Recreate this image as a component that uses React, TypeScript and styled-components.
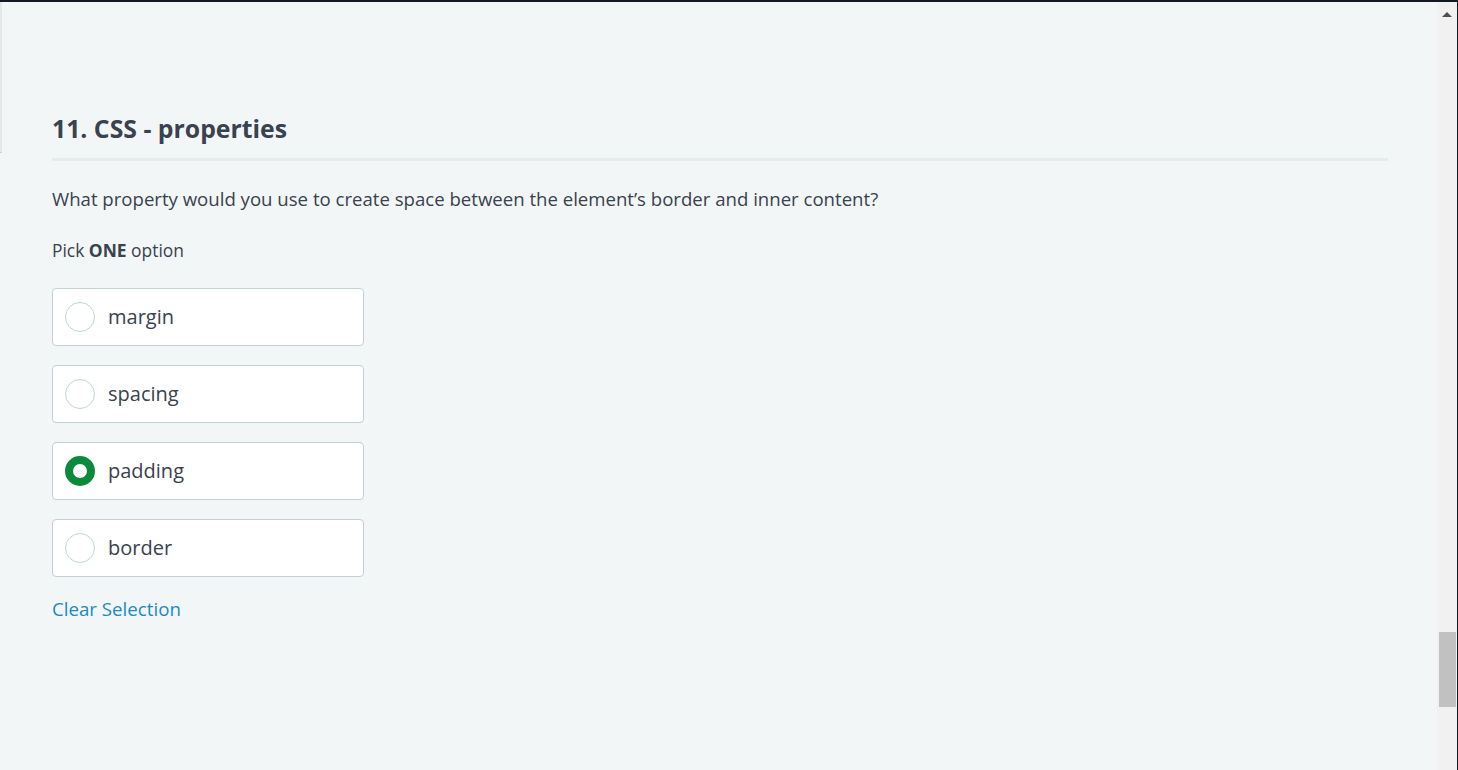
import styled, { createGlobalStyle } from "styled-components"

const GlobalStyle = createGlobalStyle`
  html, body {
    margin: 0;
    padding: 0;
    height: 100%;
    overflow: hidden;
  }
  body {
    font-family: "Open Sans", "Noto Sans", sans-serif;
    background: #f3f6f7;
  }
`

const options = ["margin", "spacing", "padding", "border"]
const selected = "padding"

type RadioProps = {
  $checked?: boolean
}

const Option = ({ label }: { label: string }) => {
  const checked = label === selected
  return (
    <OptionBox>
      <Radio $checked={checked} />
      <Label>{label}</Label>
    </OptionBox>
  )
}

export default function App() {
  return (
    <Frame>
      <GlobalStyle />
      <Main>
        <EdgeStrip />
        <Content>
          <Title>11. CSS - properties</Title>
          <Divider />
          <Question>
            What property would you use to create space between the element’s
            border and inner content?
          </Question>
          <Hint>
            Pick <strong>ONE</strong> option
          </Hint>
          <OptionList>
            {options.map((o) => (
              <Option key={o} label={o} />
            ))}
          </OptionList>
          <ClearLink>Clear Selection</ClearLink>
        </Content>
      </Main>
      <Scrollbar>
        <ArrowUp />
        <Track>
          <Thumb />
        </Track>
      </Scrollbar>
    </Frame>
  )
}

const Frame = styled.div`
  display: flex;
  height: 100vh;
  box-sizing: border-box;
  border-top: 2px solid #111a24;
  border-right: 1px solid #111a24;
`

const Main = styled.div`
  flex: 1;
  display: flex;
  min-width: 0;
`

const EdgeStrip = styled.div`
  width: 2px;
  height: 150px;
  background: #e3e9ea;
  border-bottom: 1px solid #c9d0d2;
`

const Content = styled.div`
  flex: 1;
  padding: 110px 49px 0 50px;
  color: #39424e;
`

const Title = styled.h2`
  margin: 0;
  font-size: 24.8px;
  line-height: 32px;
  font-weight: 700;
  color: #39424e;
`

const Divider = styled.div`
  height: 3px;
  background: #e6eced;
  margin-top: 14px;
`

const Question = styled.p`
  margin: 26px 0 0;
  font-size: 18.6px;
  line-height: 24px;
`

const Hint = styled.p`
  margin: 27px 0 0;
  font-size: 17.4px;
  line-height: 24px;

  strong {
    font-weight: 700;
  }
`

const OptionList = styled.div`
  display: flex;
  flex-direction: column;
  gap: 19px;
  margin-top: 26px;
`

const OptionBox = styled.div`
  width: 312px;
  height: 58px;
  box-sizing: border-box;
  display: flex;
  align-items: center;
  padding-left: 12px;
  background: #fff;
  border: 1px solid #c2d1d6;
  border-radius: 4px;
`

const Radio = styled.span<RadioProps>`
  width: 30px;
  height: 30px;
  box-sizing: border-box;
  border-radius: 50%;
  background: #fff;
  border: ${(p) => (p.$checked ? "8px solid #0a8a3a" : "1px solid #c2d3d6")};
  flex-shrink: 0;
`

const Label = styled.span`
  margin-left: 13px;
  margin-top: -1px;
  font-size: 20px;
  color: #39424e;
`

const ClearLink = styled.a`
  display: inline-block;
  margin-top: 20px;
  font-size: 18.7px;
  line-height: 24px;
  color: #1a8ac6;
  cursor: pointer;
`

const Scrollbar = styled.div`
  width: 20px;
  display: flex;
  flex-direction: column;
  background: #f1f1f1;
`

const ArrowUp = styled.div`
  height: 17px;
  display: flex;
  align-items: center;
  justify-content: center;

  &::before {
    content: "";
    margin-top: 8px;
    border-left: 5px solid transparent;
    border-right: 5px solid transparent;
    border-bottom: 5px solid #505050;
  }
`

const Track = styled.div`
  flex: 1;
  padding: 613px 1px 0 2px;
`

const Thumb = styled.div`
  height: 75px;
  background: #c1c1c1;
`
